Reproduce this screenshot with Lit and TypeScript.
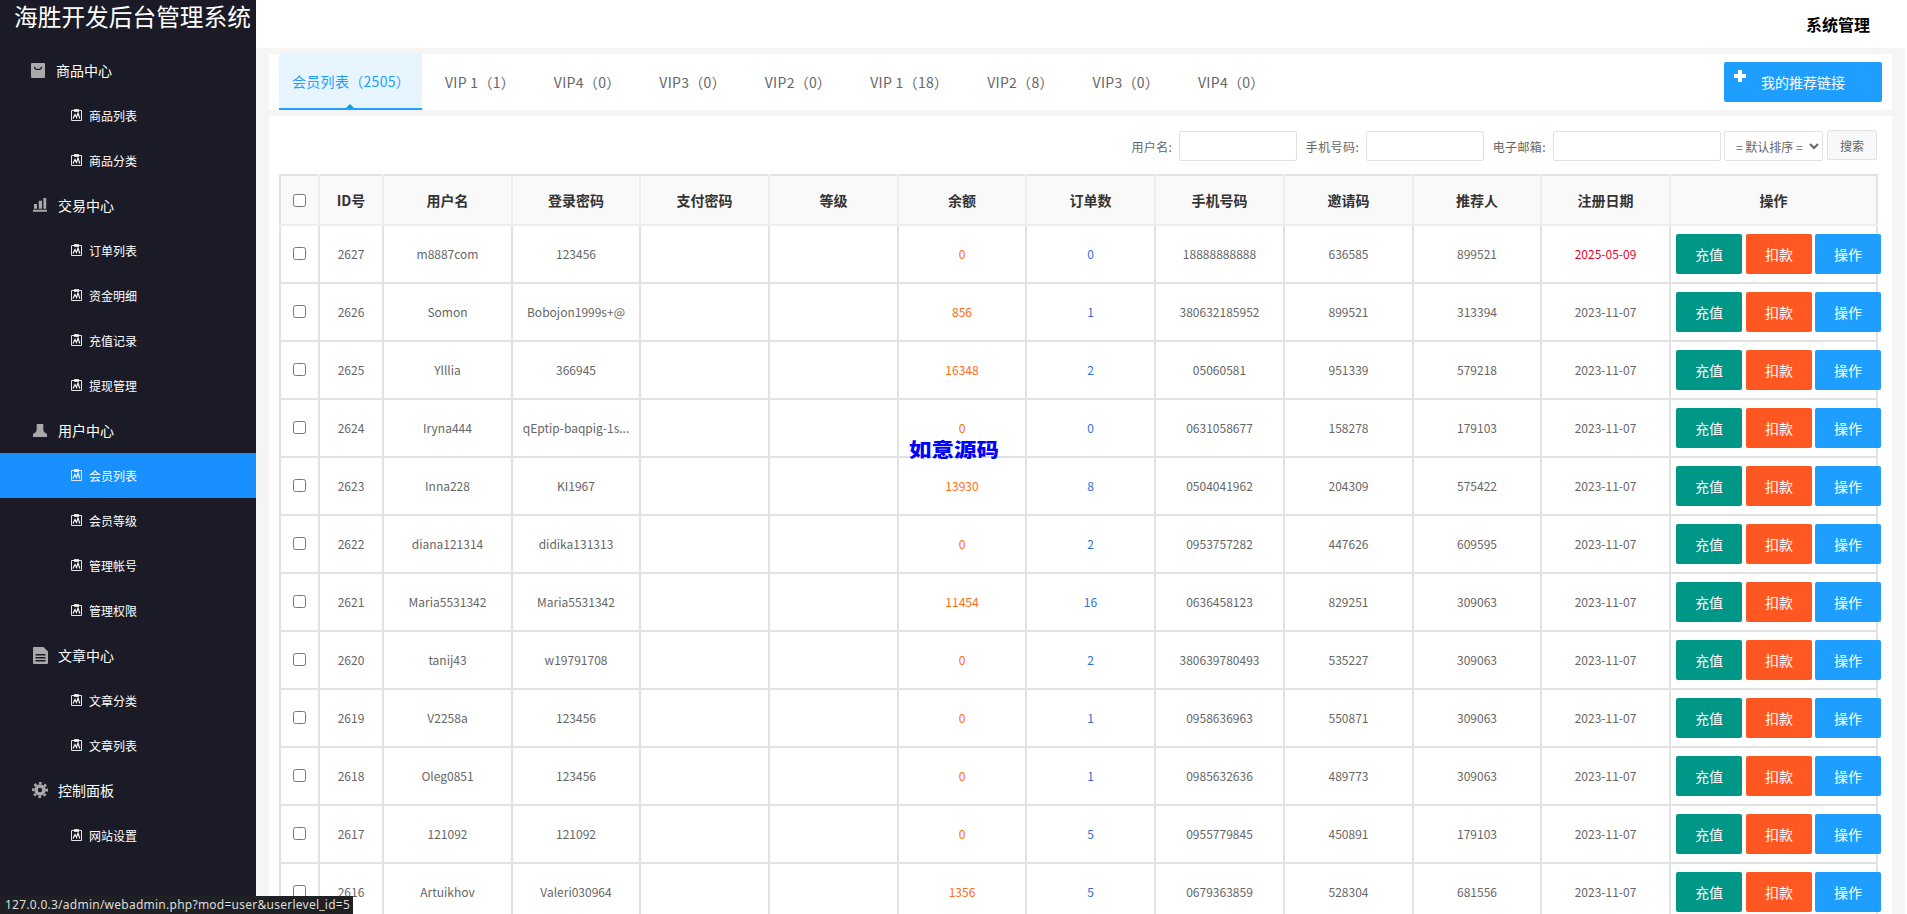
import { LitElement, html, css, svg } from "lit";
import { customElement } from "lit/decorators.js";

type Row = [string, string, string, string, string, string, string, string, string];
const rows: Row[] = [
  ["2627","m8887com","123456","0","0","18888888888","636585","899521","2025-05-09"],
  ["2626","Somon","Bobojon1999s+@","856","1","380632185952","899521","313394","2023-11-07"],
  ["2625","Ylllia","366945","16348","2","05060581","951339","579218","2023-11-07"],
  ["2624","Iryna444","qEptip-baqpig-1s...","0","0","0631058677","158278","179103","2023-11-07"],
  ["2623","Inna228","KI1967","13930","8","0504041962","204309","575422","2023-11-07"],
  ["2622","diana121314","didika131313","0","2","0953757282","447626","609595","2023-11-07"],
  ["2621","Maria5531342","Maria5531342","11454","16","0636458123","829251","309063","2023-11-07"],
  ["2620","tanij43","w19791708","0","2","380639780493","535227","309063","2023-11-07"],
  ["2619","V2258a","123456","0","1","0958636963","550871","309063","2023-11-07"],
  ["2618","Oleg0851","123456","0","1","0985632636","489773","309063","2023-11-07"],
  ["2617","121092","121092","0","5","0955779845","450891","179103","2023-11-07"],
  ["2616","Artuikhov","Valeri030964","1356","5","0679363859","528304","681556","2023-11-07"],
];

const icons: Record<string, unknown> = {
  bag: svg`<svg viewBox="0 0 14 15" width="14" height="15"><rect width="14" height="15" rx="1" fill="#a9a9a9"/><path fill="none" stroke="#1a1b26" stroke-width="1.2" d="M3.300 3.800c.6 3.600 6.800 3.600 7.400 0"/></svg>`,
  chart: svg`<svg viewBox="0 0 14 14" width="14" height="14"><path fill="#a9a9a9" d="M1 6h3v4.700H1zM5.700 2.700h3.300v8H5.700zM10.400 0h2.800v10.700h-2.800zM0 11.700h14v2H0z"/></svg>`,
  user: svg`<svg viewBox="0 0 14 13" width="14" height="13"><path fill="#a9a9a9" d="M3.700 0h6.600v5c0 1.500.4 2.500 1 3.200.8.600 2.200 1 2.700 2V13H0v-2.800c.5-1 1.900-1.400 2.700-2 .6-.7 1-1.700 1-3.200z"/></svg>`,
  doc: svg`<svg viewBox="0 0 15 17" width="15" height="17"><path fill="#a9a9a9" fill-rule="evenodd" d="M1 0h9.500L15 4.500V16a1 1 0 0 1-1 1H1a1 1 0 0 1-1-1V1a1 1 0 0 1 1-1zm1.500 7v1.500h10V7zm0 3v1.500h10V10zm0 3v1.500h10V13z"/></svg>`,
  gear: svg`<svg viewBox="0 0 16 16" width="16" height="16"><circle cx="8" cy="8" r="5.800" fill="#a9a9a9"/><circle cx="8" cy="8" r="6.800" fill="none" stroke="#a9a9a9" stroke-width="2.400" stroke-dasharray="2.700 2.640" transform="rotate(-10 8 8)"/><circle cx="8" cy="8" r="2.200" fill="#1a1b26"/></svg>`,
};

const subIcon = svg`<svg viewBox="0 0 11 12" width="11" height="12"><path fill="none" stroke="#dfe6ee" stroke-width="1" d="M.5 1.500h2.500M8 1.500h2.500v10H.5v-10"/><path fill="#fff" d="M3 .2h5v2.600H3z"/><path fill="none" stroke="#fff" stroke-width="1.100" d="M2 9.500 4 5.500l1.500 3L7 4l1.800 5.500"/></svg>`;

const menu: [string, string | null, boolean][] = [
  ["商品中心","bag",false],["商品列表",null,false],["商品分类",null,false],
  ["交易中心","chart",false],["订单列表",null,false],["资金明细",null,false],["充值记录",null,false],["提现管理",null,false],
  ["用户中心","user",false],["会员列表",null,true],["会员等级",null,false],["管理帐号",null,false],["管理权限",null,false],
  ["文章中心","doc",false],["文章分类",null,false],["文章列表",null,false],
  ["控制面板","gear",false],["网站设置",null,false],
];

const tabs = ["VIP 1（1）","VIP4（0）","VIP3（0）","VIP2（0）","VIP 1（18）","VIP2（8）","VIP3（0）","VIP4（0）"];
const heads = ["ID号","用户名","登录密码","支付密码","等级","余额","订单数","手机号码","邀请码","推荐人","注册日期","操作"];
const widths = [39,64,129,128,129,129,128,129,129,129,128,129,207];

@customElement("app-root")
export class AppRoot extends LitElement {
  static styles = css`
    :host { display: flex; height: 100vh; width: 100%; overflow: hidden; position: relative; font-family: "Noto Sans CJK SC", "Noto Sans", sans-serif; background: #fff; }
    .side { width: 256px; flex: none; background: #1a1b26; color: #fff; }
    .logo { height: 48px; box-sizing: border-box; padding: 0 0 0 14px; font-size: 23.7px; line-height: 32px; white-space: nowrap; color: #fff; }
    .item { height: 45px; box-sizing: border-box; display: flex; align-items: center; }
    .sec { padding: 0 0 1px 33px; font-size: 14px; }
    .sec .ic { width: 25px; display: flex; }
    .sec .bag { margin-left: -2px; }
    .sec .gear { margin-left: -1px; width: 26px; }
    .sub { padding: 0 0 1px 71px; font-size: 12px; }
    .sub svg { margin-right: 7px; flex: none; }
    .item.on { background: #1890ff; }
    .main { flex: 1; min-width: 0; display: flex; flex-direction: column; }
    .top { height: 48px; flex: none; display: flex; justify-content: flex-end; align-items: center; padding-right: 37px; font-size: 16px; font-weight: 700; color: #000; }
    .body { flex: 1; min-height: 0; background: #f5f5f5; margin-right: 2px; padding: 6px 13px 0; display: flex; flex-direction: column; gap: 6px; overflow: hidden; }
    .card { background: #fff; box-sizing: border-box; }
    .tabs { height: 56px; flex: none; display: flex; align-items: stretch; padding: 0 10px; font-size: 14px; color: #666; letter-spacing: .3px; }
    .tab { display: flex; align-items: center; padding: 0 19.4px; white-space: nowrap; }
    .tab.on { position: relative; box-sizing: border-box; width: 143px; padding: 0 0 0 13px; margin-right: 3.6px; background: #e6f5ff; color: #1e9fff; border-bottom: 2px solid #1e9fff; }
    .tab.on::after { content: ""; position: absolute; left: 67px; bottom: 0; border: 4px solid transparent; border-top: 0; border-bottom: 4px solid #0a9fd8; }
    .link { margin-left: auto; align-self: center; width: 158px; height: 40px; background: #1e9fff; color: #fff; border: 0; border-radius: 2px; padding: 0; display: flex; align-items: center; font: inherit; letter-spacing: 0; position: relative; }
    .link svg { position: absolute; left: 10px; top: 8px; }
    .link span { margin-left: 37px; }
    .panel { flex: 1; padding: 0 10px; min-height: 0; overflow: hidden; }
    .filter { height: 58px; display: flex; align-items: center; justify-content: flex-end; font-size: 12px; color: #666; padding: 2px 5px 0 0; box-sizing: border-box; }
    .filter label { margin: 0 7px 0 8.5px; white-space: nowrap; letter-spacing: .4px; }
    .filter input, .filter select { height: 30px; box-sizing: border-box; border: 1px solid #e2e2e2; border-radius: 2px; background: #fff; font-family: inherit; font-size: 12px; color: #666; outline: none; padding: 0 6px; }
    .filter .w1 { width: 118px; }
    .filter .w2 { width: 168px; }
    .filter select { width: 99px; margin-left: 3px; padding: 0 0 0 7px; }
    .filter button { width: 50px; height: 30px; margin: -2px 0 0 4px; background: #f8f8f8; border: 1px solid #e2e2e2; border-radius: 2px; font: inherit; color: #666; padding: 0; }
    table { border-collapse: collapse; table-layout: fixed; width: 1598px; font-size: 12px; color: #666; text-align: center; }
    th { height: 50px; padding: 0; box-sizing: border-box; background: #f9f9f9; border: 2px solid #eee; border-top-color: #e2e2e2; color: #333; font-size: 14px; font-weight: 700; }
    th:first-child { border-left-color: #e2e2e2; }
    th:last-child { border-right-color: #e2e2e2; }
    td { height: 58px; padding: 0 0 2px; box-sizing: border-box; border: 2px solid #e2e2e2; white-space: nowrap; overflow: visible; }
    input[type=checkbox] { margin: 0 auto; display: block; width: 13px; height: 13px; }
    .bal { color: #ff6a13; }
    .ord { color: #2f6fd8; }
    .new { color: #e6002d; }
    .ops { text-align: left; padding: 0 0 0 5px; }
    .ops div { display: flex; width: 205px; }
    .b { width: 66px; height: 40px; flex: none; border: 0; padding: 0; border-radius: 2px; color: #fff; font: inherit; font-size: 14px; margin-right: 4px; }
    .b.t { background: #009688; }
    .b.o { background: #ff5722; }
    .b.p { background: #1e9fff; margin-left: -1px; }
    .wm { position: absolute; left: 909px; top: 435px; font-size: 22.5px; line-height: 26px; font-weight: 900; color: #00f; white-space: nowrap; pointer-events: none; transform: scaleY(.85); }
    .status { position: absolute; left: 0; bottom: 0; height: 18px; width: 353px; box-sizing: border-box; background: #1f2023; color: #ddd; font-family: "Noto Sans", sans-serif; font-size: 12px; letter-spacing: .25px; line-height: 18px; padding-left: 5px; white-space: nowrap; overflow: hidden; }
  `;

  render() {
    return html`
      <aside class="side">
        <div class="logo">海胜开发后台管理系统</div>
        ${menu.map(([t, ic, on]) => ic
          ? html`<div class="item sec"><span class="ic ${ic}">${icons[ic]}</span><span>${t}</span></div>`
          : html`<div class="item sub ${on ? "on" : ""}">${subIcon}<span>${t}</span></div>`)}
      </aside>
      <div class="main">
        <div class="top">系统管理</div>
        <div class="body">
          <div class="card tabs">
            <div class="tab on">会员列表（2505）</div>
            ${tabs.map((t) => html`<div class="tab">${t}</div>`)}
            <button class="link"><svg width="12" height="12" viewBox="0 0 12 12"><path fill="#fff" d="M4 0h4v4h4v4H8v4H4V8H0V4h4z"/></svg><span>我的推荐链接</span></button>
          </div>
          <div class="card panel">
            <div class="filter">
              <label>用户名:</label><input class="w1" />
              <label>手机号码:</label><input class="w1" />
              <label>电子邮箱:</label><input class="w2" />
              <select><option>= 默认排序 =</option></select>
              <button>搜索</button>
            </div>
            <table>
              <colgroup>${widths.map((w) => html`<col style="width:${w}px" />`)}</colgroup>
              <thead><tr><th><input type="checkbox" /></th>${heads.map((h) => html`<th>${h}</th>`)}</tr></thead>
              <tbody>
                ${rows.map((r, i) => html`<tr>
                  <td><input type="checkbox" /></td>
                  <td>${r[0]}</td><td>${r[1]}</td><td>${r[2]}</td><td></td><td></td>
                  <td class="bal">${r[3]}</td><td class="ord">${r[4]}</td>
                  <td>${r[5]}</td><td>${r[6]}</td><td>${r[7]}</td>
                  <td class="${i === 0 ? "new" : ""}">${r[8]}</td>
                  <td class="ops"><div><button class="b t">充值</button><button class="b o">扣款</button><button class="b p">操作</button></div></td>
                </tr>`)}
              </tbody>
            </table>
          </div>
        </div>
      </div>
      <div class="wm">如意源码</div>
      <div class="status">127.0.0.3/admin/webadmin.php?mod=user&amp;userlevel_id=5</div>
    `;
  }
}
